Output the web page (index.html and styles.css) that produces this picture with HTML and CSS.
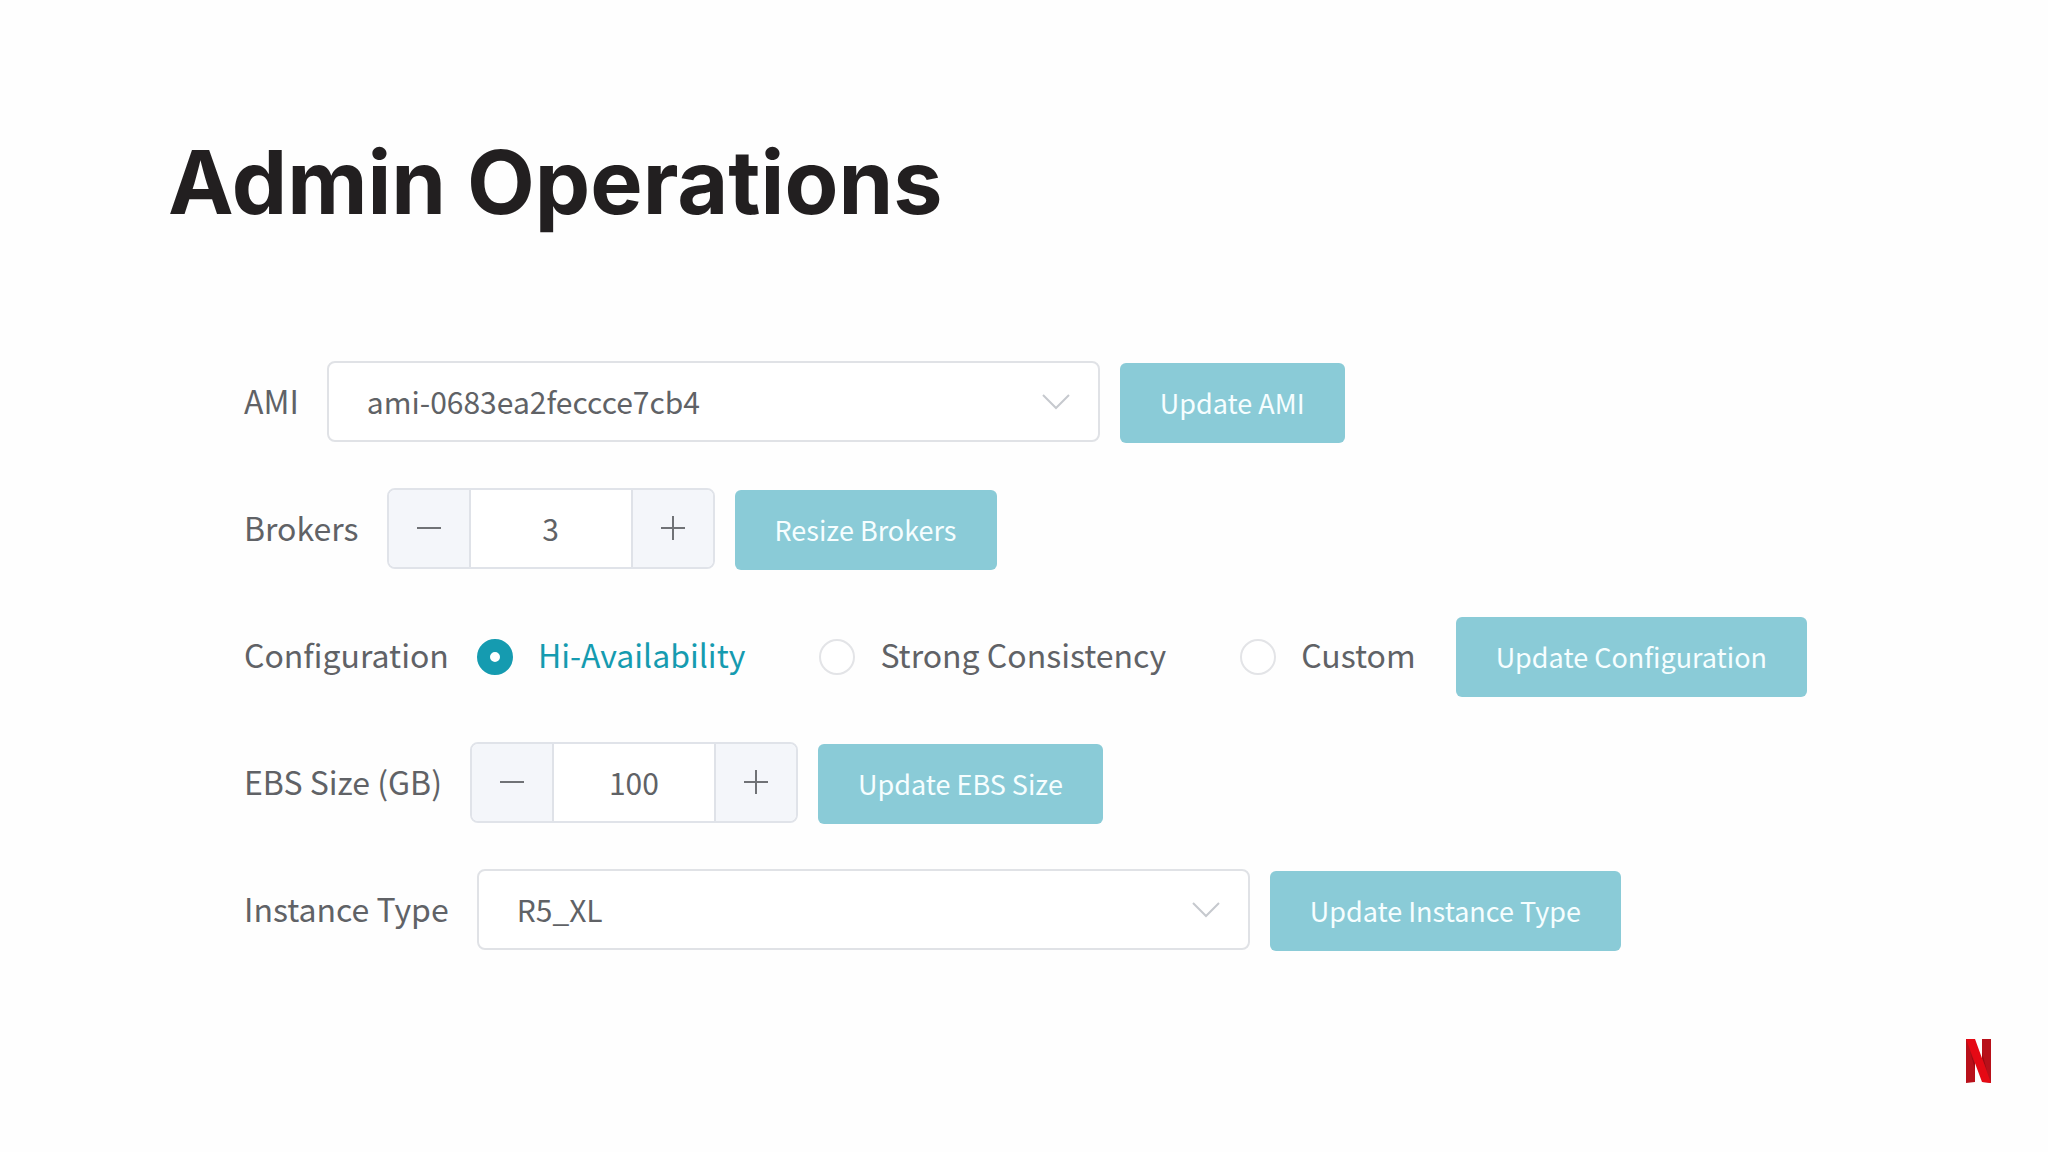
FILE: index.html
```html
<!DOCTYPE html>
<html lang="en">
<head>
<meta charset="utf-8">
<meta name="viewport" content="width=device-width, initial-scale=1">
<title>Admin Operations</title>
<link rel="stylesheet" href="styles.css">
</head>
<body>
<main class="slide">
  <h1 class="title">Admin Operations</h1>
  <form class="operations">
    <div class="row">
      <label class="label" for="ami">AMI</label>
      <div class="select">
        <select class="select-input" id="ami"><option>ami-0683ea2feccce7cb4</option></select>
        <svg class="chevron" viewBox="0 0 28 16" aria-hidden="true"><path d="M1 1L14 14L27 1"/></svg>
      </div>
      <button class="button" type="button">Update AMI</button>
    </div>
    <div class="row">
      <label class="label" for="brokers">Brokers</label>
      <div class="stepper">
        <button class="step step-down" type="button" aria-label="Fewer brokers"><svg class="step-icon" viewBox="0 0 24 24"><path d="M0 12H24"/></svg></button>
        <input class="step-input" id="brokers" type="text" inputmode="numeric" value="3">
        <button class="step step-up" type="button" aria-label="More brokers"><svg class="step-icon" viewBox="0 0 24 24"><path d="M0 12H24M12 0V24"/></svg></button>
      </div>
      <button class="button" type="button">Resize Brokers</button>
    </div>
    <div class="row" role="radiogroup" aria-labelledby="configuration">
      <span class="label" id="configuration">Configuration</span>
      <div class="radios">
        <label class="radio"><input class="radio-input" type="radio" name="configuration" checked><span class="radio-text">Hi-Availability</span></label>
        <label class="radio"><input class="radio-input" type="radio" name="configuration"><span class="radio-text">Strong Consistency</span></label>
        <label class="radio"><input class="radio-input" type="radio" name="configuration"><span class="radio-text">Custom</span></label>
      </div>
      <button class="button" type="button">Update Configuration</button>
    </div>
    <div class="row">
      <label class="label" for="ebs">EBS Size (GB)</label>
      <div class="stepper">
        <button class="step step-down" type="button" aria-label="Smaller size"><svg class="step-icon" viewBox="0 0 24 24"><path d="M0 12H24"/></svg></button>
        <input class="step-input" id="ebs" type="text" inputmode="numeric" value="100">
        <button class="step step-up" type="button" aria-label="Larger size"><svg class="step-icon" viewBox="0 0 24 24"><path d="M0 12H24M12 0V24"/></svg></button>
      </div>
      <button class="button" type="button">Update EBS Size</button>
    </div>
    <div class="row">
      <label class="label" for="instance">Instance Type</label>
      <div class="select">
        <select class="select-input" id="instance"><option>R5_XL</option></select>
        <svg class="chevron" viewBox="0 0 28 16" aria-hidden="true"><path d="M1 1L14 14L27 1"/></svg>
      </div>
      <button class="button" type="button">Update Instance Type</button>
    </div>
  </form>
  <footer class="footer">
    <svg class="logo" viewBox="0 0 25 44" role="img" aria-label="Netflix">
      <path fill="#b8101a" d="M0 0H9V43L0 44ZM16 0H25V44L16 43Z"/>
      <path fill="#9c0a12" d="M9 25V31L4 12ZM16 19V13L21 32Z"/>
      <path fill="#e50914" d="M0 0H9L25 44Q20 43 16 43L0 0Z"/>
    </svg>
  </footer>
</main>
</body>
</html>
```
FILE: styles.css
```css
*, *::before, *::after {
  box-sizing: border-box;
}

body {
  margin: 0;
  background: #fefefe;
  color: #606266;
  font-family: "Noto Sans CJK SC", "Noto Sans", sans-serif;
}

.slide {
  display: flex;
  flex-direction: column;
  min-height: 100vh;
  padding: 128px 57px 69px 168px;
}

.title {
  margin: 0;
  color: #221f20;
  font: 700 88px/108px Inter, "Liberation Sans", sans-serif;
}

.operations {
  display: flex;
  flex-direction: column;
  gap: 45px;
  padding: 125px 0 0 76px;
}

.row {
  display: flex;
  align-items: flex-start;
  height: 82px;
}

.label,
.radio {
  font-size: 32px;
  line-height: 78px;
  white-space: nowrap;
}

.label {
  margin-right: 28px;
}

.select {
  display: grid;
  align-items: center;
  flex: 0 1 773px;
}

.select-input {
  grid-area: 1 / 1;
  width: 100%;
  height: 81px;
  padding: 0 80px 2px 38px;
  border: 2px solid #e0e2e6;
  border-radius: 8px;
  background: #fff;
  color: inherit;
  font: 400 30px/40px "Noto Sans CJK SC", "Noto Sans", sans-serif;
  appearance: none;
}

.chevron {
  grid-area: 1 / 1;
  justify-self: end;
  width: 28px;
  height: 16px;
  margin-right: 30px;
  fill: none;
  stroke: #c6c9ce;
  stroke-width: 2;
  pointer-events: none;
}

.button {
  align-self: flex-end;
  flex: none;
  height: 80px;
  margin-left: 20px;
  padding: 0 40px;
  border: 0;
  border-radius: 6px;
  background: #8acbd7;
  color: #f6feff;
  font: 400 27px/40px "Noto Sans CJK SC", "Noto Sans", sans-serif;
}

.stepper {
  display: flex;
  width: 328px;
  height: 81px;
  border: 2px solid #e0e3e9;
  border-radius: 8px;
  background: #fff;
  overflow: hidden;
}

.step {
  display: grid;
  place-items: center;
  flex: 0 0 82px;
  padding: 0 0 2px;
  border: 0 solid #dfe2e8;
  background: #f4f6fa;
}

.step-down {
  border-right-width: 2px;
}

.step-up {
  border-left-width: 2px;
}

.step-icon {
  width: 24px;
  height: 24px;
  fill: none;
  stroke: #707276;
  stroke-width: 2;
}

.step-input {
  flex: 1;
  min-width: 0;
  padding: 0 0 2px;
  border: 0;
  background: none;
  color: inherit;
  font: 400 30px/40px "Noto Sans CJK SC", "Noto Sans", sans-serif;
  text-align: center;
}

.radios {
  display: flex;
  gap: 74px;
  margin-right: 20px;
}

.radio {
  display: flex;
  align-items: flex-start;
  gap: 25px;
}

.radio-input {
  width: 36px;
  height: 36px;
  margin: 24px 0 0;
  border: 2px solid #e3e4e7;
  border-radius: 50%;
  background: #fff;
  appearance: none;
}

.radio-input:checked {
  border: 13px solid #159bb0;
}

.radio-input:checked + .radio-text {
  color: #159bb0;
}

.footer {
  display: flex;
  justify-content: flex-end;
  margin-top: auto;
}

.logo {
  width: 25px;
  height: 44px;
}
```
